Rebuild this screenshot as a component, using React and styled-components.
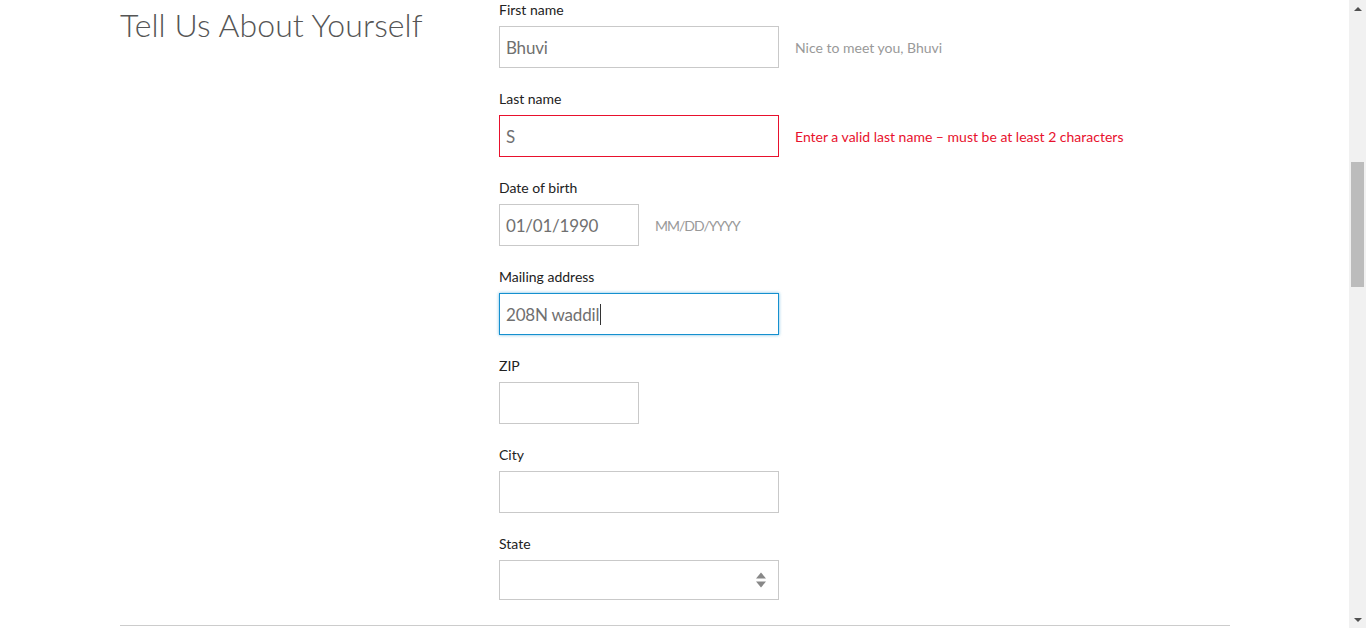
import React from "react";
import styled, { createGlobalStyle } from "styled-components";

const GlobalStyle = createGlobalStyle`
  html, body {
    margin: 0;
    padding: 0;
    height: 100%;
    overflow: hidden;
    background: #fff;
  }
  body {
    font-family: Lato, "Open Sans", Arial, sans-serif;
    color: #222;
  }
`;

const Page = styled.div`
  display: flex;
  flex-direction: row;
  height: 628px;
`;

const Main = styled.div`
  flex: 1;
  display: flex;
  flex-direction: column;
  padding: 0 119px 0 120px;
`;

const Section = styled.div`
  display: grid;
  grid-template-columns: 379px 1fr;
`;

const Title = styled.h1`
  margin: 0;
  padding-top: 5px;
  font-family: Lato, sans-serif;
  font-weight: 300;
  font-size: 32px;
  line-height: 40px;
  letter-spacing: 0.1px;
  color: #555;
`;

const Form = styled.div`
  display: flex;
  flex-direction: column;
`;

const Group = styled.div`
  display: flex;
  flex-direction: column;
  margin-bottom: 21px;
`;

const Label = styled.div`
  font-size: 14px;
  line-height: 20px;
  color: #222;
  margin-bottom: 6px;
`;

const Row = styled.div`
  display: flex;
  flex-direction: row;
  align-items: center;
`;

const Field = styled.div`
  box-sizing: border-box;
  width: ${(p) => (p.$small ? "140px" : "280px")};
  height: ${(p) => p.$h || 42}px;
  border: 1px solid
    ${(p) => (p.$error ? "#e8112d" : p.$focus ? "#1590cf" : "#c9c9c9")};
  box-shadow: ${(p) => (p.$focus ? "0 0 3px rgba(21, 144, 207, 0.6)" : "none")};
  padding: 0 6px;
  display: flex;
  align-items: center;
  font-size: 17px;
  letter-spacing: -0.2px;
  color: #707070;
  position: relative;
`;

const Caret = styled.span`
  display: inline-block;
  width: 1px;
  height: 21px;
  background: #333;
  margin-left: 1px;
`;

const Hint = styled.span`
  margin-left: 16px;
  font-size: 14px;
  letter-spacing: ${(p) => p.$ls || 0}px;
  color: ${(p) => (p.$error ? "#e8112d" : "#999")};
`;

const Arrows = styled.div`
  position: absolute;
  right: 12px;
  top: 50%;
  transform: translateY(-50%);
  display: flex;
  flex-direction: column;
  gap: 3px;
`;

const Tri = styled.span`
  width: 0;
  height: 0;
  border-left: 5px solid transparent;
  border-right: 5px solid transparent;
  ${(p) =>
    p.$up ? "border-bottom: 6px solid #888;" : "border-top: 6px solid #888;"}
`;

const Divider = styled.div`
  margin-top: 4px;
  height: 1px;
  background: #ccc;
`;

const Scrollbar = styled.div`
  width: 17px;
  background: #f1f1f1;
  display: flex;
  flex-direction: column;
  align-items: center;
`;

const ScrollArrow = styled.div`
  height: 17px;
  display: flex;
  align-items: center;
  justify-content: center;
`;

const ScrollTrack = styled.div`
  flex: 1;
  width: 100%;
  display: flex;
  flex-direction: column;
  align-items: center;
`;

const Thumb = styled.div`
  margin-top: 145px;
  width: 13px;
  height: 125px;
  background: #bcbcbc;
`;

const ScrollTri = styled.span`
  width: 0;
  height: 0;
  border-left: 4px solid transparent;
  border-right: 4px solid transparent;
  ${(p) =>
    p.$up ? "border-bottom: 4px solid #505050;" : "border-top: 4px solid #505050;"}
`;

export default function App() {
  return (
    <>
      <GlobalStyle />
      <Page>
        <Main>
          <Section>
            <Title>Tell Us About Yourself</Title>
            <Form>
              <Group>
                <Label>First name</Label>
                <Row>
                  <Field>Bhuvi</Field>
                  <Hint>Nice to meet you, Bhuvi</Hint>
                </Row>
              </Group>
              <Group>
                <Label>Last name</Label>
                <Row>
                  <Field $error>S</Field>
                  <Hint $error>
                    Enter a valid last name – must be at least 2 characters
                  </Hint>
                </Row>
              </Group>
              <Group>
                <Label>Date of birth</Label>
                <Row>
                  <Field $small>01/01/1990</Field>
                  <Hint $ls={-1}>MM/DD/YYYY</Hint>
                </Row>
              </Group>
              <Group>
                <Label>Mailing address</Label>
                <Row>
                  <Field $focus>
                    208N waddil
                    <Caret />
                  </Field>
                </Row>
              </Group>
              <Group>
                <Label>ZIP</Label>
                <Row>
                  <Field $small />
                </Row>
              </Group>
              <Group>
                <Label>City</Label>
                <Row>
                  <Field />
                </Row>
              </Group>
              <Group>
                <Label>State</Label>
                <Row>
                  <Field $h={40}>
                    <Arrows>
                      <Tri $up />
                      <Tri />
                    </Arrows>
                  </Field>
                </Row>
              </Group>
            </Form>
          </Section>
          <Divider />
        </Main>
        <Scrollbar>
          <ScrollArrow>
            <ScrollTri $up />
          </ScrollArrow>
          <ScrollTrack>
            <Thumb />
          </ScrollTrack>
          <ScrollArrow>
            <ScrollTri />
          </ScrollArrow>
        </Scrollbar>
      </Page>
    </>
  );
}
